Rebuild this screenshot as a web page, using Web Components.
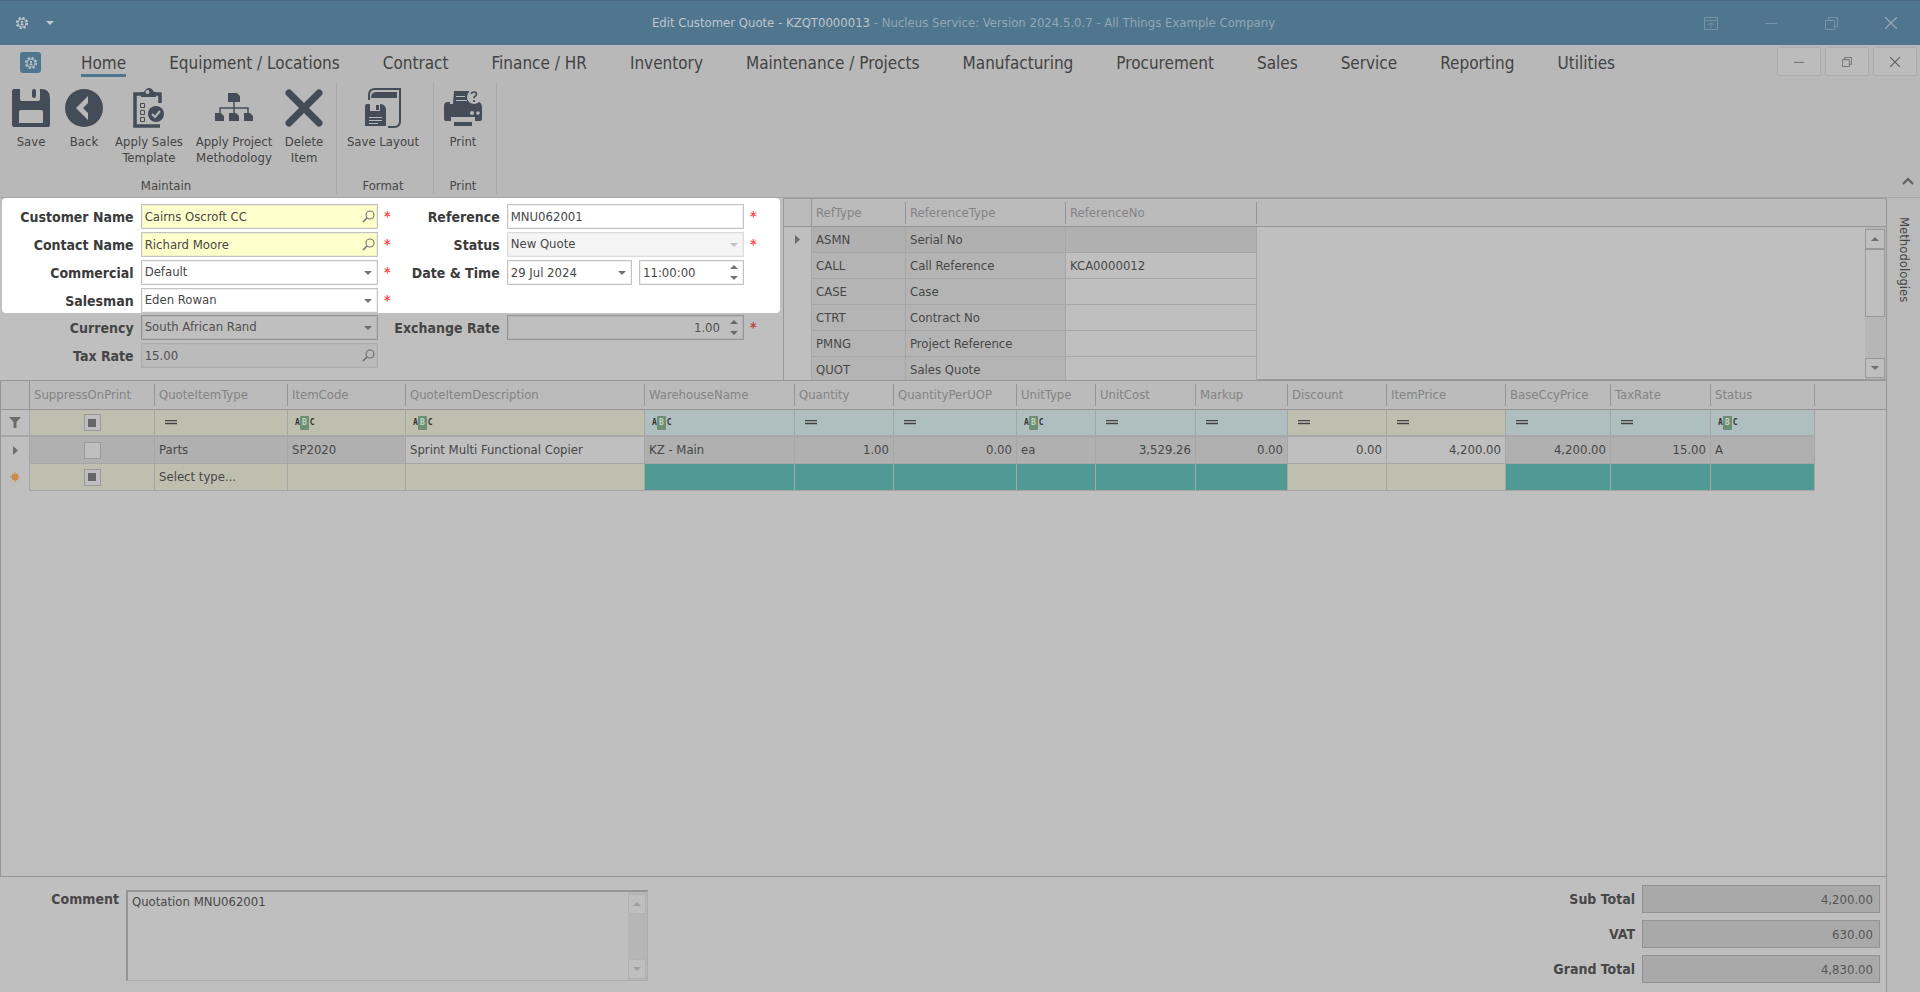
<!DOCTYPE html>
<html lang="en">
<head>
<meta charset="utf-8">
<title>Edit Customer Quote - KZQT0000013</title>
<style>
  html, body { height: 100%; }
  body {
    margin: 0;
    background: #bfbfbf;
    color: #474747;
    font-family: "DejaVu Sans Condensed", "DejaVu Sans", "Noto Sans", sans-serif;
    font-size: 13px;
    line-height: 16px;
  }
</style>
</head>
<body>
<quote-window></quote-window>

<script>
const icons = {
  gear: `<svg viewBox="0 0 16 16" width="16" height="16" fill="none" stroke="currentColor"><circle cx="8" cy="8" r="6" stroke-width="2" stroke-dasharray="2.6 2.1"/><circle cx="8" cy="8" r="4.6" stroke-width="1.2"/><circle cx="8" cy="6.8" r="1.3" fill="currentColor" stroke="none"/><path d="M6 10.6q0-2.4 2-2.4t2 2.4z" fill="currentColor" stroke="none"/></svg>`,
  caret: `<svg viewBox="0 0 8 4" width="8" height="4"><path d="M0 0h8L4 4z" fill="currentColor"/></svg>`,
  caretUp: `<svg viewBox="0 0 8 4" width="8" height="4"><path d="M0 4h8L4 0z" fill="currentColor"/></svg>`,
  ribbonMode: `<svg viewBox="0 0 14 13" width="14" height="13" fill="none" stroke="currentColor"><path d="M.5.5h13v12H.5zM.5 3.5h13M7 11V6M4.500 8L7 5.500 9.500 8"/></svg>`,
  minimise: `<svg viewBox="0 0 12 12" width="12" height="12"><path d="M0 6.500h12" stroke="currentColor"/></svg>`,
  restore: `<svg viewBox="0 0 13 13" width="13" height="13" fill="none" stroke="currentColor"><path d="M.5 3.500h9v9h-9zM3.500 3V.5h9v9H10"/></svg>`,
  close: `<svg viewBox="0 0 12 12" width="12" height="12"><path d="M0 0l12 12M12 0L0 12" stroke="currentColor" stroke-width="1.3"/></svg>`,
  chevronUp: `<svg viewBox="0 0 12 8" width="12" height="8"><path d="M1 7l5-5 5 5" fill="none" stroke="currentColor" stroke-width="2"/></svg>`,
  search: `<svg viewBox="0 0 13 13" width="13" height="13" fill="none" stroke="currentColor"><circle cx="8" cy="5" r="4" stroke-width="1.1"/><path d="M5 8L1 12" stroke-width="1.6"/></svg>`,
  save: `<svg viewBox="0 0 38 38" width="38" height="38"><path fill="currentColor" fill-rule="evenodd" d="M2 0H8V10q0 2 2 2H26q2 0 2-2V0H29Q38 0 38 9V36q0 2-2 2H2q-2 0-2-2V2Q0 0 2 0zM7 23V34h24V23q0-2-2-2H9q-2 0-2 2z"/><rect x="20" y="0" width="4" height="9" rx="2" fill="currentColor"/></svg>`,
  back: `<svg viewBox="0 0 38 38" width="38" height="38"><circle cx="19" cy="19" r="19" fill="currentColor"/><path d="M23 7v7l-5 5 5 5v7L11 19z" fill="#b8b8b8"/></svg>`,
  template: `<svg viewBox="0 0 32 40" width="32" height="40" fill="none" stroke="currentColor"><path d="M27 15V6H2V38H27" stroke-width="3.500"/><path d="M8 9V4h3q2-4 5-4t5 4h2v5z" fill="currentColor" stroke="none"/><circle cx="14.500" cy="4" r="2" fill="#b8b8b8" stroke="none"/><path d="M7.500 15.500h4v4h-4zM7.500 22.500h4v4h-4zM7.500 29.500h4v4h-4z"/><circle cx="23" cy="26" r="8" fill="currentColor" stroke="none"/><path d="M19 26l3 3 5-6" stroke="#b8b8b8" stroke-width="2"/></svg>`,
  methodology: `<svg viewBox="0 0 38 38" width="38" height="38" fill="currentColor"><path d="M13 4h9l3 3v6H13zM0 24h6l3 3v5H0zM14 24h7l3 3v5H14zM29 24h6l3 3v5H29z"/><path d="M19 13v11M5 24v-5h28v5" fill="none" stroke="currentColor" stroke-width="1.500"/></svg>`,
  remove: `<svg viewBox="0 0 38 38" width="38" height="38"><path d="M4 4l30 30M34 4L4 34" stroke="currentColor" stroke-width="7" stroke-linecap="round"/></svg>`,
  layout: `<svg viewBox="0 0 36 40" width="36" height="40"><path d="M4 12V7q0-6 6-6H35V33q0 6-6 6H23" fill="none" stroke="currentColor" stroke-width="2"/><path d="M6 10q0-6 5-6H32V10z" fill="currentColor"/><path d="M2 16H5v7H15V16q5 0 6 5V38H0V18q0-2 2-2zM11 17h3v5H11z" fill="currentColor"/><path d="M4 29.500h13M4 32.500h13M4 35.500h9" stroke="#b8b8b8"/></svg>`,
  print: `<svg viewBox="0 0 38 38" width="38" height="38"><path d="M10 2H25V12H29V14H32V12Q38 13 38 18V30q0 2-2 2H31V28H7V32H2q-2 0-2-2V17q0-4 4-4H6V15H9zM10 33H28V37H10z" fill="currentColor"/><path d="M12 7.500h9M12 11.500h11" stroke="#b8b8b8"/><circle cx="30" cy="8" r="7" fill="#b8b8b8"/><path d="M27.500 5q0-2 2.500-2t2.500 2.200q0 1.300-1.500 2.100-1 .7-1 2M30 11v2" fill="none" stroke="currentColor" stroke-width="1.700"/><circle cx="28" cy="24" r="2" fill="#b8b8b8"/><circle cx="34" cy="24" r="1.800" fill="#b8b8b8"/></svg>`,
  funnel: `<svg viewBox="0 0 12 11" width="12" height="11"><path d="M0 0h12L7.500 5v6h-3V5z" fill="#6c6c6c"/></svg>`,
  current: `<svg viewBox="0 0 5 9" width="5" height="9"><path d="M0 0l5 4.500L0 9z" fill="#6c6c6c"/></svg>`,
  newRow: `<svg viewBox="0 0 12 12" width="12" height="12"><path d="M6 1v10M1 6h10M2.500 2.500l7 7M9.500 2.500l-7 7" stroke="#c88d4c"/><circle cx="6" cy="6" r="3.300" fill="#c88d4c"/></svg>`,
  equals: `<svg viewBox="0 0 12 5" width="12" height="5"><path d="M0 .5h12M0 3.500h12" stroke="#444" stroke-width="1.3"/></svg>`
};

class TitleBar extends HTMLElement {
  constructor() {
    super();
    this.attachShadow({ mode: "open" }).innerHTML = `
      <style>
        :host { display: flex; align-items: center; height: 45px; background: #50758f; color: #c4c9cc; box-sizing: border-box; border-top: 1px solid #4a687d; }
        .side { flex: 1; display: flex; align-items: center; }
        .left { padding-left: 14px; gap: 12px; }
        .right { justify-content: flex-end; padding-right: 7px; gap: 16px; color: #7894a7; }
        h1 { margin: 0; font-size: 13px; font-weight: 400; color: #93a8b6; white-space: nowrap; }
        b { font-weight: 400; color: #bfc6cb; }
        button { display: flex; align-items: center; justify-content: center; width: 44px; height: 30px; padding: 0; border: 0; background: none; color: inherit; }
        .left button { width: 16px; }
        .left svg { max-width: 14px; }
        button.close { color: #93a8b6; }
      </style>
      <div class="side left">
        <button aria-label="Application">${icons.gear}</button>
        <button aria-label="Quick access">${icons.caret}</button>
      </div>
      <h1><b>Edit Customer Quote - KZQT0000013</b> - Nucleus Service: Version 2024.5.0.7 - All Things Example Company</h1>
      <div class="side right">
        <button aria-label="Ribbon display">${icons.ribbonMode}</button>
        <button aria-label="Minimise">${icons.minimise}</button>
        <button aria-label="Restore">${icons.restore}</button>
        <button class="close" aria-label="Close">${icons.close}</button>
      </div>`;
  }
}
customElements.define("title-bar", TitleBar);

class RibbonTabs extends HTMLElement {
  connectedCallback() {
    const tabs = ["Home", "Equipment / Locations", "Contract", "Finance / HR", "Inventory", "Maintenance / Projects",
      "Manufacturing", "Procurement", "Sales", "Service", "Reporting", "Utilities"];
    this.attachShadow({ mode: "open" }).innerHTML = `
      <style>
        :host { display: flex; align-items: flex-start; height: 34px; }
        .app { display: flex; align-items: center; justify-content: center; width: 21px; height: 21px; margin: 7px 40px 0 20px; padding: 0; border: 0; border-radius: 3px; background: #50758f; color: #b8c4cc; }
        .app svg { width: 14px; }
        nav { display: flex; flex: 1; gap: 43px; padding-top: 7px; }
        a { color: #434343; font-size: 17px; line-height: 22px; border-bottom: 3px solid transparent; text-decoration: none; white-space: nowrap; }
        a.active { border-color: #50758f; }
        .mdi { display: flex; gap: 4px; padding: 2px 3px 0 0; }
        .mdi button { display: flex; align-items: center; justify-content: center; width: 44px; height: 29px; padding: 0; border: 1px solid #adadad; border-radius: 2px; background: #bcbcbc; color: #5c5c5c; }
        .mdi svg { width: 10px; height: 10px; }
      </style>
      <button class="app" aria-label="File">${icons.gear}</button>
      <nav>${tabs.map((tab, i) => `<a href="#"${i === 0 ? ' class="active"' : ""}>${tab}</a>`).join("")}</nav>
      <div class="mdi">
        <button aria-label="Minimise document">${icons.minimise}</button>
        <button aria-label="Restore document">${icons.restore}</button>
        <button aria-label="Close document">${icons.close}</button>
      </div>`;
  }
}
customElements.define("ribbon-tabs", RibbonTabs);

class RibbonGroup extends HTMLElement {
  constructor() {
    super();
    this.attachShadow({ mode: "open" }).innerHTML = `
      <style>
        :host { display: flex; flex-direction: column; justify-content: space-between; height: 112px; box-sizing: border-box; border-right: 1px solid #aaaaaa; }
        .buttons { display: flex; padding: 5px 9px 0 5px; }
        .caption { text-align: center; line-height: 16px; padding-right: 4px; }
      </style>
      <div class="buttons"><slot></slot></div>
      <div class="caption"></div>`;
  }
  connectedCallback() {
    this.shadowRoot.querySelector(".caption").textContent = this.getAttribute("caption");
  }
}
customElements.define("ribbon-group", RibbonGroup);

class RibbonButton extends HTMLElement {
  constructor() {
    super();
    this.attachShadow({ mode: "open" }).innerHTML = `
      <style>
        :host { display: block; }
        button { display: flex; flex-direction: column; align-items: center; width: 100%; padding: 0; border: 0; background: none; color: #444; font: inherit; line-height: 16px; text-align: center; white-space: nowrap; }
        .icon { display: flex; align-items: center; height: 41px; margin-bottom: 6px; color: #444c57; }
      </style>
      <button><span class="icon"></span><span><slot></slot></span></button>`;
  }
  connectedCallback() {
    this.shadowRoot.querySelector(".icon").innerHTML = icons[this.getAttribute("icon")];
  }
}
customElements.define("ribbon-button", RibbonButton);

// kind: lookup | select | text | spin | datetime
class QuoteField extends HTMLElement {
  connectedCallback() {
    const label = this.getAttribute("label");
    const value = this.getAttribute("value");
    const kind = this.getAttribute("kind") || "text";
    const required = this.hasAttribute("required");

    this.attachShadow({ mode: "open" }).innerHTML = `
      <style>
        :host { display: flex; align-items: center; height: 25px; --line: var(--field-line, #c3c3c3); --fill: var(--field-fill, #fff); }
        :host([tone="lookup"]) { --fill: #ffffcc; }
        :host([tone="disabled"]) { --fill: #f5f5f5; --line: #dcdcdc; --mark: #c4c4c4; }
        :host([tone="flat"]) { --fill: #bbbbbb; --line: #adadad; }
        label { width: var(--label-width, 132px); margin-right: 7px; text-align: right; font-size: 14px; font-weight: 700; color: var(--label-color, #3b3b3b); white-space: nowrap; }
        .controls { display: flex; gap: 7px; width: 238px; }
        .box { display: flex; align-items: center; flex: 1; height: 25px; box-sizing: border-box; border: 1px solid var(--line); background: var(--fill); box-shadow: inset 0 0 0 1px color-mix(in srgb, var(--line) 25%, transparent); }
        .time { flex: 0 0 105px; }
        input, select { flex: 1; min-width: 0; width: 100%; height: 100%; box-sizing: border-box; margin: 0; padding: 0 0 1px 3px; border: 0; outline: 0; border-radius: 0; background: none; color: var(--text, #474747); font: inherit; appearance: none; opacity: 1; }
        .number { text-align: right; padding-right: 5px; }
        .mark { display: flex; flex-direction: column; gap: 7px; align-items: center; justify-content: center; width: 18px; padding: 0; border: 0; background: none; color: var(--mark, #747474); pointer-events: none; }
        .mark button { display: flex; padding: 0; border: 0; background: none; color: inherit; }
        .star { width: 8px; margin-left: 6px; padding-bottom: 2px; color: var(--star, #ff4d4d); font-weight: 700; font-size: 14px; }
      </style>
      <label for="value">${label}</label>
      <div class="controls">${this.controls(kind, value, label)}</div>
      <span class="star">${required ? "*" : ""}</span>`;
  }

  controls(kind, value, label) {
    const disabled = this.getAttribute("tone") === "disabled" ? " disabled" : "";
    const spinner = `<span class="mark"><button aria-label="Increase">${icons.caretUp}</button><button aria-label="Decrease">${icons.caret}</button></span>`;

    if (kind === "lookup") {
      return `<div class="box"><input id="value" value="${value}"><button class="mark" aria-label="Find ${label}">${icons.search}</button></div>`;
    }
    if (kind === "select") {
      return `<div class="box"><select id="value"${disabled}><option>${value}</option></select><span class="mark">${icons.caret}</span></div>`;
    }
    if (kind === "spin") {
      return `<div class="box"><input id="value" class="number" value="${value}">${spinner}</div>`;
    }
    if (kind === "datetime") {
      return `
        <div class="box"><input id="value" value="${value}"><button class="mark" aria-label="Calendar">${icons.caret}</button></div>
        <div class="box time"><input aria-label="Time" value="${this.getAttribute("time")}">${spinner}</div>`;
    }
    return `<div class="box"><input id="value" value="${value}"></div>`;
  }
}
customElements.define("quote-field", QuoteField);

class ScrollBar extends HTMLElement {
  constructor() {
    super();
    this.attachShadow({ mode: "open" }).innerHTML = `
      <style>
        :host { display: flex; flex-direction: column; width: 19px; box-sizing: border-box; padding: 2px 1px 1px 0; background: #b6b6b6; --edge: #989898; color: #6e6e6e; }
        :host([disabled]) { --edge: #b2b2b2; color: #9f9f9f; }
        button { display: flex; align-items: center; justify-content: center; height: 20px; padding: 0; border: 1px solid var(--edge); background: #bfbfbf; color: inherit; }
        .track { flex: 1; }
        .thumb { height: 68px; box-sizing: border-box; border: 1px solid var(--edge); background: #bfbfbf; }
        :host([disabled]) .thumb { display: none; }
      </style>
      <button aria-label="Scroll up">${icons.caretUp}</button>
      <div class="track"><div class="thumb"></div></div>
      <button aria-label="Scroll down">${icons.caret}</button>`;
  }
}
customElements.define("scroll-bar", ScrollBar);

class DataGrid extends HTMLElement {
  constructor() {
    super();
    this.attachShadow({ mode: "open" });
  }

  set data({ columns, rows }) {
    this.shadowRoot.innerHTML = `
      <style>
        :host { display: block; overflow: hidden; min-width: 0; }
        table { width: 100%; table-layout: fixed; border-collapse: separate; border-spacing: 0; }
        th, td { padding: 0; box-sizing: border-box; white-space: nowrap; overflow: hidden; text-align: left; font-weight: 400; }
        th { height: var(--head, 28px); background: #bbbbbb; border-bottom: 1px solid #959595; color: #838383; }
        th div { height: 22px; line-height: 22px; padding-left: 4px; border-right: 1px solid #959595; }
        th.mark { border-right: 1px solid #959595; }
        th.mark div, th.filler div { border: 0; }
        td { height: var(--row, 27px); padding: 0 4px; border-right: 1px solid #a6a6a6; border-bottom: 1px solid #a6a6a6; background: #b4b4b4; }
        td.mark { padding: 0; text-align: center; background: #bfbfbf; border-bottom-color: #bfbfbf; }
        td.filler { background: none; border: 0; }
        tr.filter td { border-bottom: 2px solid #a8a8a8; }
        tr.filter td.filler { border: 0; }
        tr.current td { background: #b0b0b0; }
        tr td.white, tr.current td.mark, tr.current td.white { background: #bfbfbf; }
        tr.current td.filler { background: none; }
        td.cream { background: #bfbfb0; }
        td.pale { background: #afbfbf; }
        td.teal { background: #519994; }
        td.number { text-align: right; }
        td.check { text-align: center; }
        td svg { display: block; }
        td.mark svg { margin: 0 auto; }
        .equals { padding-left: 6px; }
        input { appearance: none; display: inline-grid; place-content: center; width: 17px; height: 17px; box-sizing: border-box; margin: 0; border: 1px solid #999; background: #bfbfbf; vertical-align: middle; }
        input.mixed::before { content: ""; width: 8px; height: 8px; background: #666; }
        .abc { display: flex; align-items: center; padding-left: 3px; font: 700 8px/14px "DejaVu Sans Mono", monospace; color: #333; }
        .abc b { width: 9px; margin-right: 1px; background: #6c8f73; color: #c4d3c6; text-align: center; border-radius: 1px; }
      </style>
      <table>
        <colgroup>${columns.map(c => `<col style="width:${c.width}px">`).join("")}<col></colgroup>
        <thead><tr>${columns.map(c => `<th class="${c.name ? "" : "mark"}"><div>${c.name}</div></th>`).join("")}<th class="filler"></th></tr></thead>
        <tbody>${rows.map(row => `<tr class="${row.kind || ""}">${row.cells.map(cell => this.cell(cell)).join("")}<td class="filler"></td></tr>`).join("")}</tbody>
      </table>`;
  }

  // a cell is "tone|content", where the content may name an icon or a check box
  cell(source) {
    const [tone, content = ""] = source.split("|");
    const parts = {
      "=": `<div class="equals">${icons.equals}</div>`,
      abc: `<div class="abc"><span>A</span><b>B</b><span>C</span></div>`,
      "[]": `<input type="checkbox" aria-label="Suppress on print">`,
      "[-]": `<input type="checkbox" class="mixed" aria-label="Suppress on print">`
    };
    return `<td class="${tone}">${tone === "mark" ? icons[content] || "" : parts[content] || content}</td>`;
  }
}
customElements.define("data-grid", DataGrid);

class CommentBox extends HTMLElement {
  constructor() {
    super();
    this.attachShadow({ mode: "open" }).innerHTML = `
      <style>
        :host { display: flex; align-items: flex-start; }
        label { width: 119px; margin-right: 7px; text-align: right; font-size: 14px; font-weight: 700; line-height: 18px; }
        .box { display: flex; width: 522px; height: 91px; box-sizing: border-box; border: 1px solid #adadad; border-top: 2px solid #959595; border-left: 2px solid #959595; }
        textarea { flex: 1; resize: none; overflow: hidden; margin: 0; padding: 2px 4px; border: 0; outline: 0; background: none; color: inherit; font: inherit; }
      </style>
      <label for="comment">Comment</label>
      <div class="box"><textarea id="comment">Quotation MNU062001</textarea><scroll-bar disabled></scroll-bar></div>`;
  }
}
customElements.define("comment-box", CommentBox);

class TotalField extends HTMLElement {
  connectedCallback() {
    this.attachShadow({ mode: "open" }).innerHTML = `
      <style>
        :host { display: flex; align-items: center; justify-content: flex-end; }
        label { margin-right: 7px; font-size: 14px; font-weight: 700; }
        input { width: 238px; height: 28px; box-sizing: border-box; margin: 0; padding: 0 6px; border: 1px solid #929292; border-radius: 0; background: #a9a9a9; color: #555; font: inherit; text-align: right; }
      </style>
      <label for="total">${this.getAttribute("label")}</label>
      <input id="total" readonly value="${this.getAttribute("value")}">`;
  }
}
customElements.define("total-field", TotalField);

const windowTemplate = document.createElement("template");

windowTemplate.innerHTML = `
  <style>
    :host { display: flex; flex-direction: column; min-height: 100vh; }
    .ribbon { background: #b8b8b8; border-bottom: 1px solid #a6a6a6; }
    .groups { display: flex; padding-top: 3px; height: 115px; }
    .collapse { margin-left: auto; align-self: flex-end; padding: 0 6px 12px; border: 0; background: none; color: #5c5c5c; display: flex; }
    .w46 { width: 46px; } .w48 { width: 48px; } .w52 { width: 52px; } .w54 { width: 54px; } .w76 { width: 76px; } .w82 { width: 82px; } .w94 { width: 94px; }
    .body { flex: 1; display: flex; }
    .main { flex: 1; min-width: 0; display: flex; flex-direction: column; border-right: 1px solid #969696; }
    .rail { width: 33px; box-sizing: border-box; padding: 19px 0 0 9px; background: #bababa; }
    .rail a { writing-mode: vertical-rl; color: #474747; text-decoration: none; }
    .top { display: flex; height: 182px; }
    .form { flex: none; width: 783px; box-sizing: border-box; padding-left: 2px; }
    .fields { display: grid; grid-template-columns: 390px 366px; row-gap: 3px; }
    .right { --label-width: 108px; }
    .lit { width: 778px; box-sizing: border-box; padding-top: 6px; border-radius: 4px; background: #fff; }
    .dim { padding-top: 2px; --field-fill: #bfbfbf; --field-line: #959595; --label-color: #454545; --text: #505050; --mark: #6a6a6a; --star: #bf4343; }
    .refs { flex: 1; min-width: 0; display: grid; grid-template-columns: 1fr; grid-template-rows: 181px; border: 1px solid #999; border-right: 0; box-sizing: border-box; --row: 26px; }
    .refs > * { grid-area: 1 / 1; }
    .refs scroll-bar { justify-self: end; width: 21px; margin-top: 28px; margin-bottom: 1px; }
    .items { flex: 1; border: 1px solid #969696; border-right: 0; --head: 29px; }
    .footer { display: flex; justify-content: space-between; height: 115px; box-sizing: border-box; }
    comment-box { padding-top: 13px; }
    .totals { display: flex; flex-direction: column; gap: 7px; padding: 8px 6px 0 0; }
  </style>
  <title-bar></title-bar>
  <div class="ribbon">
    <ribbon-tabs></ribbon-tabs>
    <div class="groups">
      <ribbon-group caption="Maintain">
        <ribbon-button class="w52" icon="save">Save</ribbon-button>
        <ribbon-button class="w54" icon="back">Back</ribbon-button>
        <ribbon-button class="w76" icon="template">Apply Sales<br>Template</ribbon-button>
        <ribbon-button class="w94" icon="methodology">Apply Project<br>Methodology</ribbon-button>
        <ribbon-button class="w46" icon="remove">Delete<br>Item</ribbon-button>
      </ribbon-group>
      <ribbon-group caption="Format">
        <ribbon-button class="w82" icon="layout">Save Layout</ribbon-button>
      </ribbon-group>
      <ribbon-group caption="Print">
        <ribbon-button class="w48" icon="print">Print</ribbon-button>
      </ribbon-group>
      <button class="collapse" aria-label="Collapse ribbon">${icons.chevronUp}</button>
    </div>
  </div>
  <div class="body">
    <div class="main">
      <div class="top">
        <div class="form">
          <div class="fields lit">
            <quote-field label="Customer Name" kind="lookup" tone="lookup" value="Cairns Oscroft CC" required></quote-field>
            <quote-field class="right" label="Reference" value="MNU062001" required></quote-field>
            <quote-field label="Contact Name" kind="lookup" tone="lookup" value="Richard Moore" required></quote-field>
            <quote-field class="right" label="Status" kind="select" tone="disabled" value="New Quote" required></quote-field>
            <quote-field label="Commercial" kind="select" value="Default" required></quote-field>
            <quote-field class="right" label="Date &amp; Time" kind="datetime" value="29 Jul 2024" time="11:00:00"></quote-field>
            <quote-field label="Salesman" kind="select" value="Eden Rowan" required></quote-field>
          </div>
          <div class="fields dim">
            <quote-field label="Currency" kind="select" value="South African Rand"></quote-field>
            <quote-field class="right" label="Exchange Rate" kind="spin" value="1.00" required></quote-field>
            <quote-field label="Tax Rate" kind="lookup" tone="flat" value="15.00"></quote-field>
          </div>
        </div>
        <div class="refs">
          <data-grid id="refs"></data-grid>
          <scroll-bar></scroll-bar>
        </div>
      </div>
      <data-grid id="items" class="items"></data-grid>
      <div class="footer">
        <comment-box></comment-box>
        <div class="totals">
          <total-field label="Sub Total" value="4,200.00"></total-field>
          <total-field label="VAT" value="630.00"></total-field>
          <total-field label="Grand Total" value="4,830.00"></total-field>
        </div>
      </div>
    </div>
    <div class="rail"><a href="#">Methodologies</a></div>
  </div>
`;

class QuoteWindow extends HTMLElement {
  connectedCallback() {
    this.attachShadow({ mode: "open" });
    this.shadowRoot.appendChild(windowTemplate.content.cloneNode(true));

    this.shadowRoot.querySelector("#refs").data = {
      columns: [
        { name: "", width: 28 },
        { name: "RefType", width: 94 },
        { name: "ReferenceType", width: 160 },
        { name: "ReferenceNo", width: 191 }
      ],
      rows: [
        { kind: "current", cells: ["mark|current", "|ASMN", "|Serial No", ""] },
        { cells: ["mark", "|CALL", "|Call Reference", "white|KCA0000012"] },
        { cells: ["mark", "|CASE", "|Case", "white"] },
        { cells: ["mark", "|CTRT", "|Contract No", "white"] },
        { cells: ["mark", "|PMNG", "|Project Reference", "white"] },
        { cells: ["mark", "|QUOT", "|Sales Quote", "white"] }
      ]
    };

    this.shadowRoot.querySelector("#items").data = {
      columns: [
        { name: "", width: 29 },
        { name: "SuppressOnPrint", width: 125 },
        { name: "QuoteItemType", width: 133 },
        { name: "ItemCode", width: 118 },
        { name: "QuoteItemDescription", width: 239 },
        { name: "WarehouseName", width: 150 },
        { name: "Quantity", width: 99 },
        { name: "QuantityPerUOP", width: 123 },
        { name: "UnitType", width: 79 },
        { name: "UnitCost", width: 100 },
        { name: "Markup", width: 92 },
        { name: "Discount", width: 99 },
        { name: "ItemPrice", width: 119 },
        { name: "BaseCcyPrice", width: 105 },
        { name: "TaxRate", width: 100 },
        { name: "Status", width: 104 }
      ],
      rows: [
        {
          kind: "filter",
          cells: ["mark|funnel", "cream check|[-]", "cream|=", "cream|abc", "cream|abc", "pale|abc", "pale|=", "pale|=",
            "pale|abc", "pale|=", "pale|=", "cream|=", "cream|=", "pale|=", "pale|=", "pale|abc"]
        },
        {
          kind: "current",
          cells: ["mark|current", "check|[]", "|Parts", "|SP2020", "white|Sprint Multi Functional Copier", "|KZ - Main",
            "number|1.00", "number|0.00", "|ea", "number|3,529.26", "number|0.00", "white number|0.00",
            "white number|4,200.00", "number|4,200.00", "number|15.00", "|A"]
        },
        {
          cells: ["mark|newRow", "cream check|[-]", "cream|Select type...", "cream", "cream", "teal", "teal", "teal",
            "teal", "teal", "teal", "cream", "cream", "teal", "teal", "teal"]
        }
      ]
    };
  }
}
customElements.define("quote-window", QuoteWindow);
</script>
</body>
</html>
